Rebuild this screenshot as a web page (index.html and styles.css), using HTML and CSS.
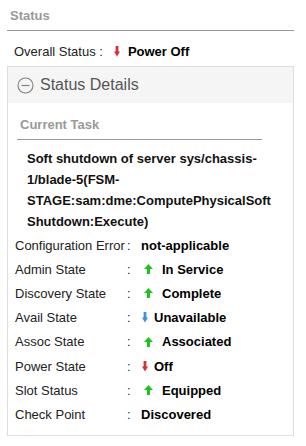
FILE: index.html
```html
<!DOCTYPE html>
<html lang="en">
<head>
    <meta charset="UTF-8">
    <meta name="viewport" content="width=device-width, initial-scale=1.0">
    <title>Status</title>
    <link rel="stylesheet" href="styles.css">
</head>
<body>
    <div class="section-title">Status</div>

    <div class="overall">
        <span class="overall-label">Overall Status :</span>
        <svg class="arrow-down red" width="6" height="11" viewBox="0 0 6 11"><rect x="1.6" y="0" width="2.8" height="6"/><polygon points="0,5.5 6,5.5 3,10.5"/></svg>
        <b>Power Off</b>
    </div>

    <div class="panel">
        <div class="panel-header">
            <svg class="toggle" width="17" height="17" viewBox="0 0 17 17">
                <circle cx="8.5" cy="8.5" r="7.5" fill="none" stroke="#808080" stroke-width="1.1"/>
                <line x1="4.5" y1="8.5" x2="12.5" y2="8.5" stroke="#808080" stroke-width="1.2"/>
            </svg>
            <span>Status Details</span>
        </div>

        <div class="panel-body">
            <div class="sub-title">Current Task</div>
            <div class="task">Soft shutdown of server sys/chassis-1/blade-5(FSM-STAGE:sam:dme:ComputePhysicalSoft Shutdown:Execute)</div>

            <div class="props">
                <div class="prop-label">Configuration Error</div>
                <div class="colon">:</div>
                <div class="prop-value"><b>not-applicable</b></div>

                <div class="prop-label">Admin State</div>
                <div class="colon">:</div>
                <div class="prop-value up"><svg class="arrow-up" width="9" height="10" viewBox="0 0 9 10"><polygon points="0,5 4.5,0 9,5"/><rect x="3" y="4.5" width="3" height="5.5"/></svg><b>In Service</b></div>

                <div class="prop-label">Discovery State</div>
                <div class="colon">:</div>
                <div class="prop-value up"><svg class="arrow-up" width="9" height="10" viewBox="0 0 9 10"><polygon points="0,5 4.5,0 9,5"/><rect x="3" y="4.5" width="3" height="5.5"/></svg><b>Complete</b></div>

                <div class="prop-label">Avail State</div>
                <div class="colon">:</div>
                <div class="prop-value down"><svg class="arrow-down blue" width="6" height="11" viewBox="0 0 6 11"><rect x="1.6" y="0" width="2.8" height="6"/><polygon points="0,5.5 6,5.5 3,10.5"/></svg><b>Unavailable</b></div>

                <div class="prop-label">Assoc State</div>
                <div class="colon">:</div>
                <div class="prop-value up"><svg class="arrow-up" width="9" height="10" viewBox="0 0 9 10"><polygon points="0,5 4.5,0 9,5"/><rect x="3" y="4.5" width="3" height="5.5"/></svg><b>Associated</b></div>

                <div class="prop-label">Power State</div>
                <div class="colon">:</div>
                <div class="prop-value down"><svg class="arrow-down red" width="6" height="11" viewBox="0 0 6 11"><rect x="1.6" y="0" width="2.8" height="6"/><polygon points="0,5.5 6,5.5 3,10.5"/></svg><b>Off</b></div>

                <div class="prop-label">Slot Status</div>
                <div class="colon">:</div>
                <div class="prop-value up"><svg class="arrow-up" width="9" height="10" viewBox="0 0 9 10"><polygon points="0,5 4.5,0 9,5"/><rect x="3" y="4.5" width="3" height="5.5"/></svg><b>Equipped</b></div>

                <div class="prop-label">Check Point</div>
                <div class="colon">:</div>
                <div class="prop-value"><b>Discovered</b></div>
            </div>
        </div>
    </div>
</body>
</html>
```

FILE: styles.css
```css
body {
    margin: 0;
    width: 306px;
    background-color: #fff;
    font-family: "Liberation Sans", Arial, sans-serif;
    font-size: 13px;
    color: #222;
}

b {
    color: #000;
}

.section-title {
    margin: 0 12px 0 7px;
    padding: 8px 0 0 3px;
    height: 22px;
    border-bottom: 1px solid #999;
    font-size: 13px;
    font-weight: bold;
    color: #999;
}

.overall {
    display: flex;
    align-items: center;
    height: 16px;
    padding: 12px 0 7px 14px;
}

.overall-label {
    margin-right: 11px;
}

.overall .arrow-down {
    margin-right: 8px;
}

.red { fill: #d3333b; }
.blue { fill: #3a8fe8; }
.arrow-up { fill: #1fc21f; }

.panel {
    margin-left: 7px;
    width: 285px;
    height: 368px;
    border: 1px solid #ddd;
}

.panel-header {
    display: flex;
    align-items: center;
    gap: 6px;
    height: 36px;
    padding-left: 9px;
    background-color: #f5f5f5;
    font-size: 16px;
    color: #555;
}

.panel-body {
    padding: 10px 0 0 9px;
}

.sub-title {
    width: 242px;
    padding: 4px 0 0 3px;
    height: 22px;
    border-bottom: 1px solid #999;
    font-size: 13px;
    font-weight: bold;
    color: #999;
}

.task {
    width: 240px;
    margin: 8px 0 0 10px;
    font-weight: bold;
    line-height: 21px;
    color: #111;
}

.props {
    display: grid;
    grid-template-columns: 112px 14px auto;
    grid-auto-rows: 24.2px;
    align-items: center;
    margin: 1px 0 0 -2px;
}

.prop-value {
    display: flex;
    align-items: center;
}

.prop-value.up svg {
    margin: 0 9px 0 3px;
}

.prop-value.down svg {
    margin: 0 6px 0 1px;
}
```
